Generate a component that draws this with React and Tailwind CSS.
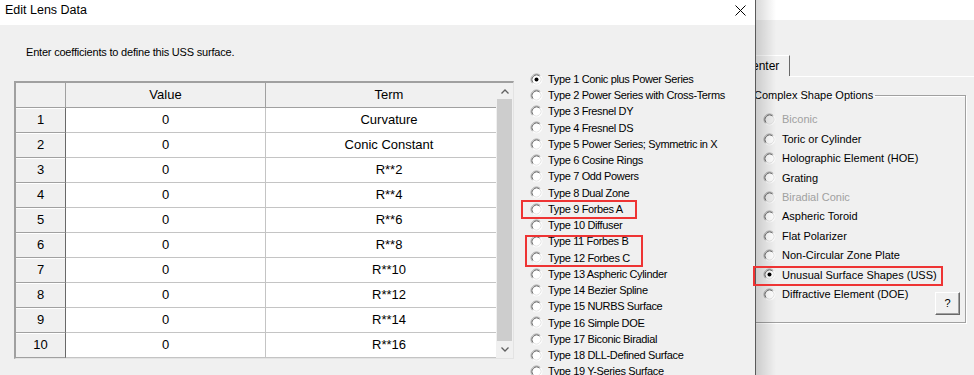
import React from 'react';

const terms = ['Curvature', 'Conic Constant', 'R**2', 'R**4', 'R**6', 'R**8', 'R**10', 'R**12', 'R**14', 'R**16'];

const types = [
  'Type 1 Conic plus Power Series',
  'Type 2 Power Series with Cross-Terms',
  'Type 3 Fresnel DY',
  'Type 4 Fresnel DS',
  'Type 5 Power Series; Symmetric in X',
  'Type 6 Cosine Rings',
  'Type 7 Odd Powers',
  'Type 8 Dual Zone',
  'Type 9 Forbes A',
  'Type 10 Diffuser',
  'Type 11 Forbes B',
  'Type 12 Forbes C',
  'Type 13 Aspheric Cylinder',
  'Type 14 Bezier Spline',
  'Type 15 NURBS Surface',
  'Type 16 Simple DOE',
  'Type 17 Biconic Biradial',
  'Type 18 DLL-Defined Surface',
  'Type 19 Y-Series Surface',
];

const shapes = [
  { label: 'Biconic', disabled: true },
  { label: 'Toric or Cylinder' },
  { label: 'Holographic Element (HOE)' },
  { label: 'Grating' },
  { label: 'Biradial Conic', disabled: true },
  { label: 'Aspheric Toroid' },
  { label: 'Flat Polarizer' },
  { label: 'Non-Circular Zone Plate' },
  { label: 'Unusual Surface Shapes (USS)', checked: true },
];

function Radio({ checked, disabled }) {
  return (
    <svg width="13" height="13" viewBox="0 0 13 13" className="shrink-0">
      <circle cx="6.5" cy="6.5" r="5.5" fill={disabled ? '#f0f0f0' : '#ffffff'} />
      <path d="M2.61 10.39 A5.5 5.5 0 0 1 10.39 2.61" fill="none" stroke="#a0a0a0" />
      <path d="M10.39 2.61 A5.5 5.5 0 0 1 2.61 10.39" fill="none" stroke="#ffffff" />
      <path d="M3.32 9.68 A4.5 4.5 0 0 1 9.68 3.32" fill="none" stroke="#696969" />
      <path d="M9.68 3.32 A4.5 4.5 0 0 1 3.32 9.68" fill="none" stroke="#e3e3e3" />
      {checked && <circle cx="6.5" cy="6.5" r="2" fill="#000" />}
    </svg>
  );
}

function Chevron({ up }) {
  return (
    <svg width="8" height="5" viewBox="0 0 8 5">
      <polyline
        points={up ? '0.5,4.5 4,1 7.5,4.5' : '0.5,0.5 4,4 7.5,0.5'}
        fill="none"
        stroke="#606060"
        strokeWidth="1.3"
      />
    </svg>
  );
}

function LensTable() {
  return (
    <div className="ml-[14px] mt-[22px] w-[500px] flex bg-white border-t-2 border-l-2 border-[#a0a0a0] border-r border-b border-r-[#e3e3e3] border-b-[#e3e3e3] text-[13px] text-black">
      <div className="w-[480px]">
        <div className="flex h-[25px]">
          <div className="w-[50px] bg-[#f0f0f0] border-r border-b border-[#a0a0a0]" />
          <div className="w-[200px] bg-[#f0f0f0] border-r border-b border-[#a0a0a0] flex items-center justify-center">Value</div>
          <div className="flex-1 bg-[#f0f0f0] border-b border-[#a0a0a0] flex items-center justify-center pl-[16px]">Term</div>
        </div>
        {terms.map((term, i) => (
          <div key={term} className="flex h-[25px]">
            <div className="w-[50px] bg-[#f0f0f0] border-r border-r-[#696969] border-b border-b-[#a0a0a0] shadow-[inset_0_1px_0_#ffffff] flex items-center justify-center">
              {i + 1}
            </div>
            <div className="w-[200px] border-r border-b border-[#c4c4c4] flex items-center justify-center">0</div>
            <div className="flex-1 border-b border-[#c4c4c4] flex items-center justify-center pl-[16px]">{term}</div>
          </div>
        ))}
      </div>
      <div className="w-[17px] bg-[#f0f0f0] flex flex-col items-center">
        <div className="h-[16px] flex items-center justify-center">
          <Chevron up />
        </div>
        <div className="w-[15px] h-[242px] bg-[#cdcdcd]" />
        <div className="flex-1 flex items-center justify-center">
          <Chevron />
        </div>
      </div>
    </div>
  );
}

export default function App() {
  return (
    <div className="relative w-[974px] h-[375px] overflow-hidden flex bg-[#f0f0f0] font-['Liberation_Sans',Arial,sans-serif] text-black">
      {/* Edit Lens Data dialog */}
      <div className="w-[756px] shrink-0 flex flex-col border-r border-[#5a5a5a]">
        <div className="h-[25px] shrink-0 bg-white flex items-center justify-between pl-[5px] pr-[9px] pb-[4px]">
          <span className="text-[12.5px]">Edit Lens Data</span>
          <svg width="11" height="11" viewBox="0 0 11 11">
            <path d="M0.5 0.5 L10.5 10.5 M10.5 0.5 L0.5 10.5" stroke="#000" strokeWidth="1" />
          </svg>
        </div>
        <div className="flex-1 flex">
          <div className="w-[514px] shrink-0">
            <p className="mt-[20px] ml-[26px] h-[14px] leading-[14px] text-[11px] tracking-[-0.2px]">
              Enter coefficients to define this USS surface.
            </p>
            <LensTable />
          </div>
          <div className="ml-[16px] mt-[46px] text-[11px] tracking-[-0.35px]">
            {types.map((t, i) => (
              <div key={t} className="h-[16.25px] flex items-center gap-[5px] whitespace-nowrap">
                <Radio checked={i === 0} />
                <span>{t}</span>
              </div>
            ))}
          </div>
        </div>
      </div>

      {/* window behind the dialog */}
      <div className="flex-1 overflow-hidden">
        <div className="-ml-[10px] text-[11px]">
          <div className="h-[20px] bg-white" />
          <div className="mt-[35px] flex h-[22px]">
            <div className="w-[44px] h-[21px] border-t border-white border-r border-r-[#696969] flex items-center pl-[6px] text-[12px]">
              enter
            </div>
            <div className="flex-1 border-b border-white" />
          </div>
          <fieldset className="mt-[11px] w-[220px] h-[235px] border border-[#a0a0a0] shadow-[inset_1px_1px_0_#ffffff,1px_1px_0_#ffffff]">
            <legend className="ml-[7px] pr-[2px] text-[11px] leading-[14px]">Complex Shape Options</legend>
            <div className="pl-[16px] pt-[8px]">
              {shapes.map((s) => (
                <div
                  key={s.label}
                  className={`h-[19.4px] flex items-center gap-[6px] whitespace-nowrap ${s.disabled ? 'text-[#a0a0a0]' : ''}`}
                >
                  <Radio checked={s.checked} disabled={s.disabled} />
                  <span>{s.label}</span>
                </div>
              ))}
              <div className="h-[19.4px] flex items-start pr-[5px]">
                <div className="h-[19.4px] flex items-center gap-[6px] whitespace-nowrap">
                  <Radio />
                  <span>Diffractive Element (DOE)</span>
                </div>
                <button className="ml-auto mt-[7px] w-[25px] h-[23px] bg-[#f0f0f0] border border-t-white border-l-white border-r-[#696969] border-b-[#696969] shadow-[inset_-1px_-1px_0_#a0a0a0] text-[11px] leading-none">
                  ?
                </button>
              </div>
            </div>
          </fieldset>
        </div>
      </div>

      {/* dialog drop shadow */}
      <div className="absolute left-[756px] top-0 w-[20px] h-full bg-gradient-to-r from-black/15 to-transparent pointer-events-none" />

      {/* red highlight boxes */}
      <div className="absolute left-[521px] top-[200px] w-[116px] h-[19px] border-2 border-[#ee3434]" />
      <div className="absolute left-[525px] top-[235px] w-[118px] h-[32px] border-2 border-[#ee3434]" />
      <div className="absolute left-[753px] top-[266px] w-[190px] h-[20px] border-2 border-[#ee3434]" />
    </div>
  );
}
